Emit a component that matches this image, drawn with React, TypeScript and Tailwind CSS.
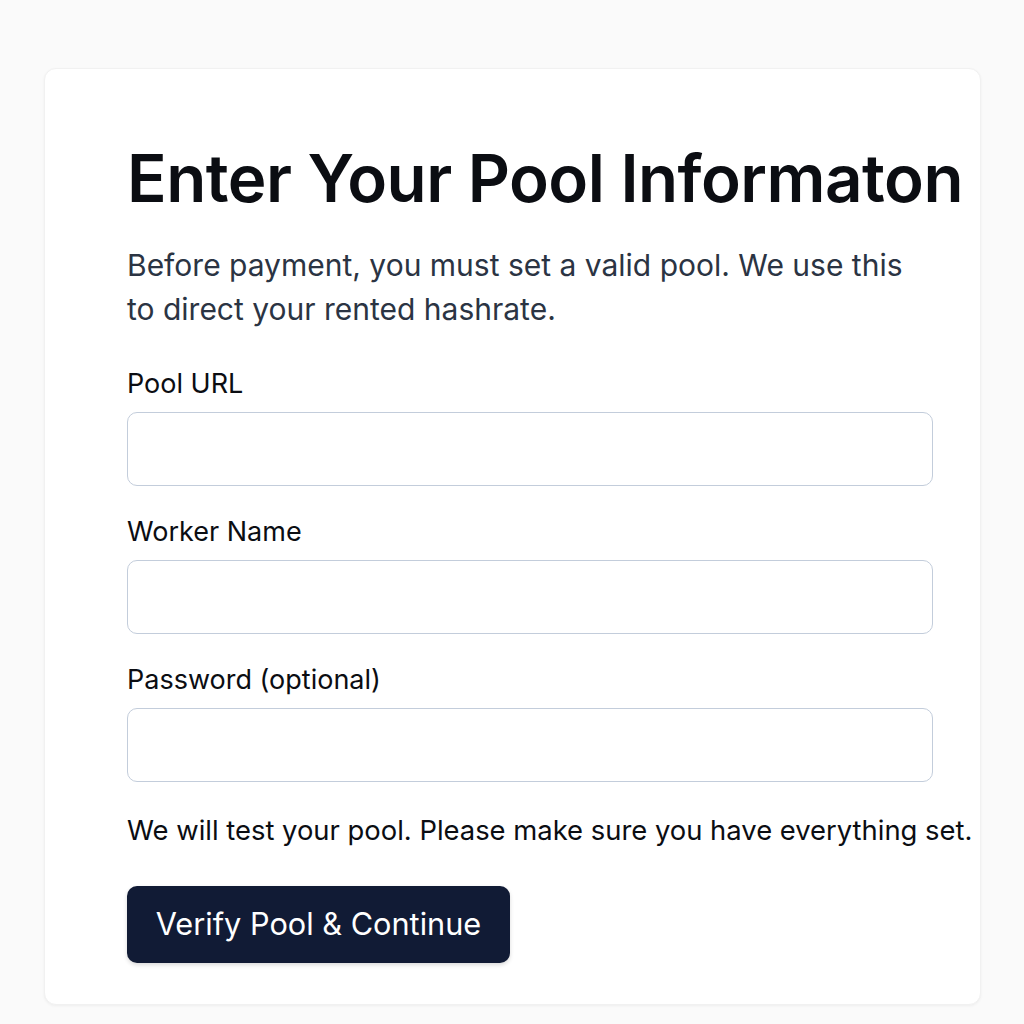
import React from "react";

const fields = ["Pool URL", "Worker Name", "Password (optional)"];

const App = () => {
  return (
    <div
      className="min-h-screen bg-[#fafafa] pt-[68px] pl-[44px]"
      style={{ fontFamily: "Inter, 'Noto Sans', sans-serif" }}
    >
      <div className="w-[937px] h-[937px] bg-white rounded-xl shadow-[0_1px_3px_rgba(0,0,0,0.05)] border border-[#f1f1f1] pl-[82px] pt-[72px]">
        <h1 className="text-[65.5px] leading-[76px] font-semibold text-[#0b0d12] tracking-[-0.5px] whitespace-nowrap">
          Enter Your Pool Informaton
        </h1>
        <p className="mt-[26px] w-[790px] text-[30px] leading-[44px] text-[#2b3443]">
          Before payment, you must set a valid pool. We use this to direct
          your rented hashrate.
        </p>

        <div className="mt-[35px] flex flex-col gap-[28px]">
          {fields.map((label) => (
            <div key={label} className="flex flex-col gap-[10px]">
              <label className="text-[27px] leading-[36px] text-[#0b0d12]">
                {label}
              </label>
              <input
                type={label.startsWith("Password") ? "password" : "text"}
                className="w-[806px] h-[74px] rounded-[10px] border border-[#c3cddb] bg-white px-4 text-[24px] outline-none"
              />
            </div>
          ))}
        </div>

        <p className="mt-[30px] text-[27.4px] leading-[36px] text-[#0b0d12] whitespace-nowrap">
          We will test your pool. Please make sure you have everything set.
        </p>

        <button className="mt-[38px] w-[383px] h-[77px] rounded-[10px] bg-[#111b35] text-white text-[30.7px] shadow-[0_2px_4px_rgba(0,0,0,0.15)]">
          Verify Pool &amp; Continue
        </button>
      </div>
    </div>
  );
};

export default App;
